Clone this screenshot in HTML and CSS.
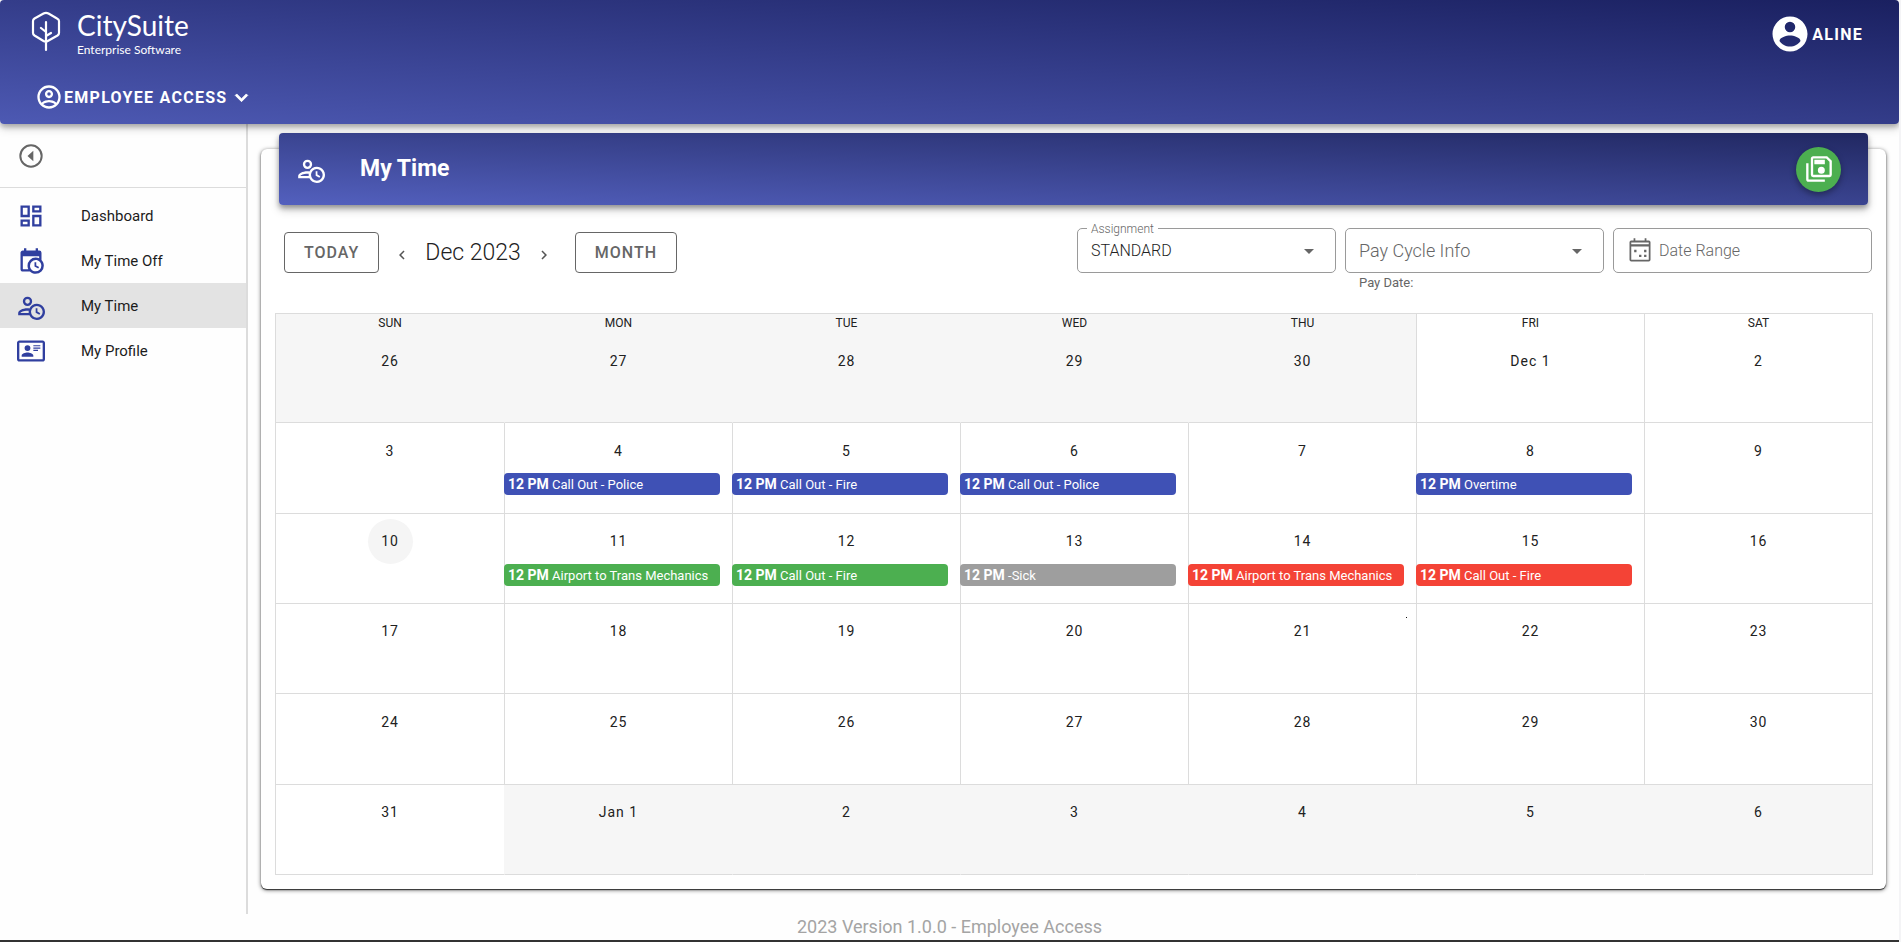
FILE: index.html
```html
<!DOCTYPE html>
<html lang="en">
<head>
<meta charset="utf-8">
<title>CitySuite - My Time</title>
<link rel="stylesheet" href="styles.css">
</head>
<body>
<svg class="sprite" aria-hidden="true">
  <symbol id="i-clock-user" viewBox="0 0 24 24"><path fill-rule="evenodd" d="M10.63,14.1C12.23,10.58 16.38,9.03 19.9,10.63C23.42,12.23 24.97,16.38 23.37,19.9C22.24,22.4 19.75,24 17,24C14.3,24 11.83,22.44 10.67,20H1V18C1.06,16.86 1.84,15.93 3.34,15.18C4.84,14.43 6.72,14.04 9,14C9.57,14 10.11,14.05 10.63,14.1M9,4A4,4 0 0,1 9,12A4,4 0 0,1 9,4M9,6A2,2 0 0,0 9,10A2,2 0 0,0 9,6M17,22A5,5 0 0,0 22,17A5,5 0 0,0 17,12A5,5 0 0,0 12,17A5,5 0 0,0 17,22M16,14H17.5V16.82L19.94,18.23L19.19,19.53L16,17.69V14M3,18H10.07C9.97,17.3 10,16.7 10.05,16.05C9.7,16 9.4,16 9,16C5.5,16 3,17.1 3,18Z"/></symbol>
</svg>

<header class="app-header">
  <div class="header-top">
    <a class="brand" href="#">
      <svg class="brand-mark" viewBox="0 0 30 41" fill="none" stroke="currentColor" stroke-width="2.2" stroke-linecap="round" stroke-linejoin="round"><path d="M15 39V11M15 21L10 17M15 25L20 22M12.5 30L3.5 24.5Q2 23.500 2 22V10Q2 8.500 3.500 7.500L12.500 2.500Q15 1.200 17.500 2.500L26 7.500Q28 8.500 28 10V22Q28 23.500 26.500 24.500L15 31L12.500 30"/></svg>
      <span class="brand-text"><span class="brand-name">CitySuite</span><span class="brand-sub">Enterprise Software</span></span>
    </a>
    <button class="flat user" type="button">
      <svg class="icon-xl" viewBox="0 0 24 24"><path d="M12,19.2C9.5,19.2 7.29,17.92 6,16C6.03,14 10,12.9 12,12.9C14,12.9 17.97,14 18,16C16.71,17.92 14.5,19.2 12,19.2M12,5A3,3 0 0,1 15,8A3,3 0 0,1 12,11A3,3 0 0,1 9,8A3,3 0 0,1 12,5M12,2A10,10 0 0,0 2,12A10,10 0 0,0 12,22A10,10 0 0,0 22,12C22,6.47 17.5,2 12,2Z"/></svg>
      <span>ALINE</span>
    </button>
  </div>
  <button class="flat module" type="button">
    <svg class="icon" viewBox="0 0 24 24"><path d="M12,2A10,10 0 0,0 2,12A10,10 0 0,0 12,22A10,10 0 0,0 22,12A10,10 0 0,0 12,2M7.07,18.28C7.5,17.38 10.12,16.5 12,16.5C13.88,16.5 16.5,17.38 16.93,18.28C15.57,19.36 13.86,20 12,20C10.14,20 8.43,19.36 7.07,18.28M18.36,16.83C16.93,15.09 13.46,14.5 12,14.5C10.54,14.5 7.07,15.09 5.64,16.83C4.62,15.5 4,13.82 4,12C4,7.59 7.59,4 12,4C16.41,4 20,7.59 20,12C20,13.82 19.38,15.5 18.36,16.83M12,6C10.06,6 8.5,7.56 8.5,9.5C8.5,11.44 10.06,13 12,13C13.94,13 15.5,11.44 15.5,9.5C15.5,7.56 13.94,6 12,6M12,11A1.5,1.5 0 0,1 10.5,9.5A1.5,1.5 0 0,1 12,8A1.5,1.5 0 0,1 13.5,9.5A1.5,1.5 0 0,1 12,11Z"/></svg>
    <span>EMPLOYEE ACCESS</span>
    <svg class="icon-m" viewBox="0 0 24 24"><path stroke="currentColor" stroke-width=".8" d="M7.41,8.58L12,13.17L16.59,8.58L18,10L12,16L6,10L7.41,8.58Z"/></svg>
  </button>
</header>

<div class="layout">
  <nav class="sidebar">
    <div class="collapse">
      <button class="flat" type="button" aria-label="Collapse menu"><svg class="icon" viewBox="0 0 24 24"><path fill-rule="evenodd" d="M12,2A10,10 0 0,1 12,22A10,10 0 0,1 12,2M12,3.700A8.300,8.300 0 0,0 12,20.300A8.300,8.300 0 0,0 12,3.700M14,7.500L9,12L14,16.500V7.500"/></svg></button>
    </div>
    <ul class="menu">
      <li><a href="#"><svg class="icon" viewBox="0 0 24 24"><path d="M19,5V7H15V5H19M9,5V11H5V5H9M19,13V19H15V13H19M9,17V19H5V17H9M21,3H13V9H21V3M11,3H3V13H11V3M21,11H13V21H21V11M11,15H3V21H11V15Z"/></svg>Dashboard</a></li>
      <li><a href="#"><svg class="icon" viewBox="0 0 24 24"><path d="M15,13H16.5V15.82L18.94,17.23L18.19,18.53L15,16.69V13M19,8H5V19H9.67C9.24,18.09 9,17.07 9,16A7,7 0 0,1 16,9C17.07,9 18.09,9.24 19,9.67V8M5,21C3.89,21 3,20.1 3,19V5C3,3.89 3.89,3 5,3H6V1H8V3H16V1H18V3H19A2,2 0 0,1 21,5V11.1C22.24,12.36 23,14.09 23,16A7,7 0 0,1 16,23C14.09,23 12.36,22.24 11.1,21H5M16,11.15A4.85,4.85 0 0,0 11.15,16C11.15,18.68 13.32,20.85 16,20.85A4.85,4.85 0 0,0 20.85,16C20.85,13.32 18.68,11.15 16,11.15Z"/></svg>My Time Off</a></li>
      <li><a class="active" href="#" aria-current="page"><svg class="icon"><use href="#i-clock-user"/></svg>My Time</a></li>
      <li><a href="#"><svg class="icon" viewBox="0 0 24 24"><path d="M22,3H2C0.91,3.04 0.04,3.91 0,5V19C0.04,20.09 0.91,20.96 2,21H22C23.09,20.96 23.96,20.09 24,19V5C23.96,3.91 23.09,3.04 22,3M22,19H2V5H22V19M14,17V15.75C14,14.09 10.66,13.25 9,13.25C7.34,13.25 4,14.09 4,15.75V17H14M9,7A2.5,2.5 0 0,0 6.5,9.5A2.5,2.5 0 0,0 9,12A2.5,2.5 0 0,0 11.5,9.5A2.5,2.5 0 0,0 9,7M14,7V8H20V7H14M14,9V10H20V9H14M14,11V12H18V11H14"/></svg>My Profile</a></li>
    </ul>
  </nav>

  <main class="content">
    <section class="card">
      <div class="card-title">
        <svg class="icon"><use href="#i-clock-user"/></svg>
        <h1>My Time</h1>
        <button class="fab" type="button" aria-label="Save all"><svg class="icon" viewBox="0 0 24 24"><path fill-rule="evenodd" d="M1,7H3V21H17V23H3C1.900,23 1,22.100 1,21V7M19,1H7C5.890,1 5,1.890 5,3V17A2,2 0 0,0 7,19H21A2,2 0 0,0 23,17V5L19,1M21,17H7V3H18.170L21,5.830V17M14,10A3,3 0 0,0 11,13A3,3 0 0,0 14,16A3,3 0 0,0 17,13A3,3 0 0,0 14,10M8,4H17V8H8V4"/></svg></button>
      </div>

      <div class="toolbar">
        <div class="period">
          <button class="outlined" type="button">TODAY</button>
          <div class="stepper">
            <button class="flat step" type="button" aria-label="Previous month"><svg class="icon-s" viewBox="0 0 24 24"><path d="M15.41,16.58L10.83,12L15.41,7.41L14,6L8,12L14,18L15.41,16.58Z"/></svg></button>
            <h2>Dec 2023</h2>
            <button class="flat step" type="button" aria-label="Next month"><svg class="icon-s" viewBox="0 0 24 24"><path d="M8.590,16.580L13.170,12L8.590,7.410L10,6L16,12L10,18L8.590,16.580Z"/></svg></button>
          </div>
          <button class="outlined" type="button">MONTH</button>
        </div>
        <div class="filters">
          <div class="field">
            <div class="box">
              <label class="floating" for="assignment">Assignment</label>
              <select id="assignment"><option>STANDARD</option></select>
              <svg class="caret" viewBox="0 0 24 24"><path d="M7,10L12,15L17,10H7Z"/></svg>
            </div>
          </div>
          <div class="field">
            <div class="box">
              <select class="placeholder" id="cycle" aria-label="Pay Cycle Info"><option>Pay Cycle Info</option></select>
              <svg class="caret" viewBox="0 0 24 24"><path d="M7,10L12,15L17,10H7Z"/></svg>
            </div>
            <label class="hint" for="cycle">Pay Date:</label>
          </div>
          <div class="field">
            <div class="box with-icon">
              <svg class="icon" viewBox="0 0 24 24"><path fill-rule="evenodd" d="M6.500,1H8V3H16V1H17.500V3H19.500Q21,3 21,4.500V19.500Q21,21 19.500,21H4.500Q3,21 3,19.500V4.500Q3,3 4.500,3H6.500ZM4.500,4.700V6.300H19.500V4.700ZM4.500,8.200V19.400H19.500V8.200ZM7,11H9V13H7ZM15.500,11H17.500V13H15.500ZM11.200,15.200H13.200V17.200H11.200ZM15.500,15.200H17.500V17.200H15.500Z"/></svg>
              <input type="text" placeholder="Date Range" aria-label="Date Range">
            </div>
          </div>
        </div>
      </div>

      <div class="calendar-wrap">
      <table class="calendar">
        <thead><tr><th class="out">SUN</th><th class="out">MON</th><th class="out">TUE</th><th class="out">WED</th><th class="out">THU</th><th>FRI</th><th>SAT</th></tr></thead>
        <tbody>
          <tr><td class="out"><span class="day">26</span></td><td class="out"><span class="day">27</span></td><td class="out"><span class="day">28</span></td><td class="out"><span class="day">29</span></td><td class="out"><span class="day">30</span></td><td><span class="day">Dec 1</span></td><td><span class="day">2</span></td></tr>
          <tr><td><span class="day">3</span></td><td><span class="day">4</span><div class="event blue"><b>12 PM</b> Call Out - Police</div></td><td><span class="day">5</span><div class="event blue"><b>12 PM</b> Call Out - Fire</div></td><td><span class="day">6</span><div class="event blue"><b>12 PM</b> Call Out - Police</div></td><td><span class="day">7</span></td><td><span class="day">8</span><div class="event blue"><b>12 PM</b> Overtime</div></td><td><span class="day">9</span></td></tr>
          <tr><td><span class="day today">10</span></td><td><span class="day">11</span><div class="event green"><b>12 PM</b> Airport to Trans Mechanics</div></td><td><span class="day">12</span><div class="event green"><b>12 PM</b> Call Out - Fire</div></td><td><span class="day">13</span><div class="event grey"><b>12 PM</b> -Sick</div></td><td><span class="day">14</span><div class="event red"><b>12 PM</b> Airport to Trans Mechanics</div></td><td><span class="day">15</span><div class="event red"><b>12 PM</b> Call Out - Fire</div></td><td><span class="day">16</span></td></tr>
          <tr><td><span class="day">17</span></td><td><span class="day">18</span></td><td><span class="day">19</span></td><td><span class="day">20</span></td><td class="dotted"><span class="day">21</span></td><td><span class="day">22</span></td><td><span class="day">23</span></td></tr>
          <tr><td><span class="day">24</span></td><td><span class="day">25</span></td><td><span class="day">26</span></td><td><span class="day">27</span></td><td><span class="day">28</span></td><td><span class="day">29</span></td><td><span class="day">30</span></td></tr>
          <tr><td><span class="day">31</span></td><td class="out"><span class="day">Jan 1</span></td><td class="out"><span class="day">2</span></td><td class="out"><span class="day">3</span></td><td class="out"><span class="day">4</span></td><td class="out"><span class="day">5</span></td><td class="out"><span class="day">6</span></td></tr>
        </tbody>
      </table>
      </div>
    </section>
  </main>
</div>

<footer class="app-footer">2023 Version 1.0.0 - Employee Access</footer>
</body>
</html>
```

FILE: styles.css
```css
* { box-sizing: border-box; }

body {
  margin: 0;
  min-height: 100vh;
  display: flex;
  flex-direction: column;
  font-family: Roboto, "Liberation Sans", sans-serif;
  font-size: 16px;
  color: #212121;
  background: #fefefe;
  border-right: 2px solid #f4f4f6;
}

button, select, input { font: inherit; color: inherit; }
button { cursor: pointer; }
svg { display: block; flex: none; fill: currentColor; }

.sprite { position: absolute; width: 0; height: 0; }
.icon { width: 28px; height: 28px; }
.icon-xl { width: 42px; height: 42px; }
.icon-m { width: 25px; height: 25px; }
.icon-s { width: 18px; height: 18px; }

.flat {
  display: flex;
  align-items: center;
  padding: 0;
  border: 0;
  background: none;
}

/* Header */
.app-header {
  position: relative;
  z-index: 2;
  display: flex;
  flex-direction: column;
  justify-content: space-between;
  height: 124px;
  padding: 11px 36px 13px 31px;
  border-radius: 4px;
  color: #fff;
  background: linear-gradient(to top right, #4d59b3, #1a2060);
  box-shadow: 0 3px 5px rgba(0, 0, 0, .25), 0 5px 10px rgba(0, 0, 0, .14);
}
.header-top { display: flex; justify-content: space-between; align-items: flex-start; }
.brand { display: flex; gap: 16px; color: inherit; text-decoration: none; }
.brand-mark { width: 30px; height: 41px; fill: none; }
.brand-text { display: flex; flex-direction: column; font-family: Lato, sans-serif; }
.brand-name { font-size: 28px; line-height: 28px; }
.brand-sub { font-size: 12px; line-height: 22px; }
.user, .module { gap: 1px; font-size: 16px; font-weight: 700; letter-spacing: .08em; }
.user { height: 46px; }
.module { align-self: flex-start; margin-left: 4px; }

/* Layout */
.layout { flex: 1; display: flex; }
.sidebar { flex: none; width: 248px; border-right: 2px solid #dcdcdc; }
.collapse {
  display: flex;
  align-items: center;
  height: 64px;
  padding-left: 17px;
  border-bottom: 1px solid #dcdcdc;
  color: #666;
}
.menu { list-style: none; margin: 0; padding: 5px 0; }
.menu a {
  display: flex;
  align-items: center;
  gap: 36px;
  height: 45px;
  padding-left: 17px;
  font-size: 15px;
  color: #1c1c1c;
  text-decoration: none;
}
.menu a.active { background: #e3e3e3; }
.menu .icon { color: #303f9f; }

/* Card */
.content { flex: 1; min-width: 0; display: flex; padding: 25px 13px 25px 13px; }
.card {
  flex: 1;
  min-width: 0;
  display: flex;
  flex-direction: column;
  padding: 0 13px 14px 14px;
  border-radius: 6px;
  background: #fff;
  box-shadow: 0 1px 1px #333, 0 1px 4px rgba(0, 0, 0, .6);
}
.card-title {
  display: flex;
  align-items: center;
  height: 72px;
  margin: -16px 5px 0 4px;
  padding: 0 27px 0 18px;
  border-radius: 4px;
  color: #fff;
  background: linear-gradient(to top right, #5360be, #212862);
  box-shadow: 0 3px 5px rgba(0, 0, 0, .3), 0 5px 10px rgba(0, 0, 0, .2);
}
.card-title h1 { flex: 1; margin: 0 0 0 35px; font-size: 23px; font-weight: 700; line-height: 32px; }
.fab {
  display: grid;
  place-items: center;
  width: 45px;
  height: 45px;
  padding: 0;
  border: 0;
  border-radius: 50%;
  color: #fff;
  background: #4caf50;
  box-shadow: 0 3px 6px rgba(0, 0, 0, .35);
}

/* Toolbar */
.toolbar { display: flex; justify-content: space-between; padding: 23px 1px 20px 9px; }
.period { display: flex; align-items: center; height: 49px; }
.outlined {
  height: 41px;
  padding: 0 19px;
  border: 1px solid #666;
  border-radius: 4px;
  background: none;
  font-weight: 500;
  letter-spacing: 1px;
  color: #666;
}
.stepper { display: flex; align-items: center; gap: 14px; padding: 0 22px 0 14px; }
.stepper h2 { margin: 0; font-size: 23px; font-weight: 300; line-height: 32px; }
.step { padding-top: 4px; color: #555; }
.filters { display: flex; gap: 9px; font-weight: 300; }
.field { width: 259px; color: #666; }
.box {
  position: relative;
  display: flex;
  align-items: center;
  height: 45px;
  border: 1px solid #9a9a9a;
  border-radius: 5px;
}
.box select, .box input {
  width: 100%;
  height: 100%;
  padding: 0 13px;
  border: 0;
  outline: 0;
  background: none;
  appearance: none;
}
.box select { color: #222; }
.box select.placeholder { font-size: 18px; color: #666; }
.box input { padding-left: 5px; }
.box input::placeholder { color: #666; opacity: 1; }
.with-icon { padding-left: 12px; }
.floating {
  position: absolute;
  top: -8px;
  left: 9px;
  padding: 0 4px;
  font-size: 12px;
  line-height: 16px;
  background: #fff;
}
.caret { position: absolute; right: 14px; width: 24px; height: 24px; pointer-events: none; }
.hint { display: block; padding-left: 14px; font-size: 13px; font-weight: 400; line-height: 20px; }

/* Calendar */
.calendar-wrap { flex: 1; display: grid; }
.calendar {
  width: 100%;
  height: 100%;
  table-layout: fixed;
  border-collapse: separate;
  border-spacing: 0;
  border: 1px solid #dcdcdc;
  border-bottom: 0;
}
.calendar th {
  height: 19px;
  padding: 0;
  font-size: 12px;
  font-weight: 400;
  line-height: 19px;
}
.calendar th + th, .calendar td + td { border-left: 1px solid #dcdcdc; }
.calendar td {
  position: relative;
  height: 90px;
  padding: 5px 0 4px;
  vertical-align: top;
  border-bottom: 1px solid #dcdcdc;
}
.calendar .out { background: #f6f6f6; }
.calendar .out + .out, .calendar td + .out { border-left-color: #f6f6f6; }
.day {
  display: grid;
  place-items: center;
  width: 45px;
  height: 45px;
  margin: 0 auto;
  border-radius: 50%;
  font-size: 14px;
  letter-spacing: 1px;
  white-space: nowrap;
}
.today { background: #f5f5f5; }
.event {
  width: 95%;
  height: 22px;
  margin-left: -1px;
  padding: 0 4px;
  border-radius: 4px;
  font-size: 13px;
  line-height: 22px;
  color: #fff;
  white-space: nowrap;
  overflow: hidden;
}
.event b { font-size: 14px; }
.blue { background: #3f51b5; }
.green { background: #4caf50; }
.grey { background: #9e9e9e; }
.red { background: #f44336; }
.dotted::after {
  content: "";
  position: absolute;
  top: 13px;
  right: 9px;
  width: 1px;
  height: 1px;
  background: #111;
}

.app-footer {
  height: 28px;
  font-size: 18px;
  line-height: 26px;
  text-align: center;
  color: #a4a4a4;
  border-bottom: 2px solid #333;
}
```
